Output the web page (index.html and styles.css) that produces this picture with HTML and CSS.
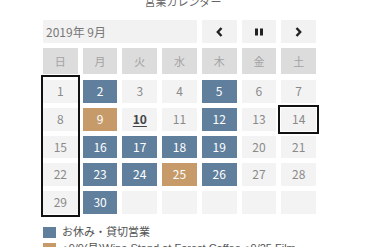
FILE: index.html
```html
<!DOCTYPE html>
<html lang="ja">
<head>
<meta charset="utf-8">
<title>営業カレンダー</title>
<link rel="stylesheet" href="styles.css">
</head>
<body>
<div class="cal">
  <div class="title">営業カレンダー</div>
  <div class="head-grid">
    <div class="month">2019年 9月</div>
    <div class="btn"><svg width="7" height="10" viewBox="0 0 7 10"><path d="M5.5 1 L1.8 5 L5.5 9" fill="none" stroke="#222" stroke-width="2.4"/></svg></div>
    <div class="btn"><svg width="8" height="8" viewBox="0 0 8 8"><rect x="0" y="0.5" width="3" height="7" fill="#222"/><rect x="5" y="0.5" width="3" height="7" fill="#222"/></svg></div>
    <div class="btn"><svg width="7" height="10" viewBox="0 0 7 10"><path d="M1.5 1 L5.2 5 L1.5 9" fill="none" stroke="#222" stroke-width="2.4"/></svg></div>
    <div class="wd">日</div>
    <div class="wd">月</div>
    <div class="wd">火</div>
    <div class="wd">水</div>
    <div class="wd">木</div>
    <div class="wd">金</div>
    <div class="wd">土</div>
  </div>
  <div class="dates">
    <div class="d">1</div>
    <div class="d off">2</div>
    <div class="d">3</div>
    <div class="d">4</div>
    <div class="d off">5</div>
    <div class="d">6</div>
    <div class="d">7</div>
    <div class="d">8</div>
    <div class="d ev">9</div>
    <div class="d today">10</div>
    <div class="d">11</div>
    <div class="d off">12</div>
    <div class="d">13</div>
    <div class="d sel">14</div>
    <div class="d">15</div>
    <div class="d off">16</div>
    <div class="d off">17</div>
    <div class="d off">18</div>
    <div class="d off">19</div>
    <div class="d">20</div>
    <div class="d">21</div>
    <div class="d">22</div>
    <div class="d off">23</div>
    <div class="d off">24</div>
    <div class="d ev">25</div>
    <div class="d off">26</div>
    <div class="d">27</div>
    <div class="d">28</div>
    <div class="d">29</div>
    <div class="d off">30</div>
    <div class="d"></div>
    <div class="d"></div>
    <div class="d"></div>
    <div class="d"></div>
    <div class="d"></div>
    <div class="sun-frame"></div>
  </div>
  <div class="legend">
    <div class="legend-item"><span class="swatch blue"></span><span>お休み・貸切営業</span></div>
    <div class="legend-item"><span class="swatch orange"></span><span>●9/9(月)Wine Stand at Forest Coffee ●9/25 Film Screening</span></div>
  </div>
</div>
</body>
</html>
```
FILE: styles.css
```css
body {
  margin: 0;
  background: #fff;
  font-family: "Noto Sans CJK JP", "Noto Sans", sans-serif;
}
.cal {
  width: 273px;
  margin-left: 43px;
}
.title {
  margin: -6px 0 12px;
  padding-left: 7px;
  text-align: center;
  font-size: 11px;
  line-height: 14px;
  color: #666;
}
.head-grid {
  display: grid;
  grid-template-columns: repeat(7, 1fr);
  grid-template-rows: 23px 26px;
  gap: 5px;
}
.month {
  grid-column: span 4;
  background: #f2f2f2;
  color: #777;
  font-size: 12px;
  line-height: 23px;
  padding-left: 3px;
}
.btn {
  background: #f2f2f2;
  display: flex;
  align-items: center;
  justify-content: center;
}
.wd {
  background: #dcdcdc;
  color: #a3a3a3;
  font-size: 11px;
  display: flex;
  align-items: center;
  justify-content: center;
}
.dates {
  position: relative;
  margin-top: 6px;
  display: grid;
  grid-template-columns: repeat(7, 1fr);
  grid-auto-rows: 22.75px;
  gap: 5px;
}
.d {
  background: #f3f3f3;
  color: #8a8a8a;
  font-size: 12px;
  line-height: 22.75px;
  text-align: center;
}
.d.off {
  background: #5f7f9d;
  color: #fff;
}
.d.ev {
  background: #c69b69;
  color: #fff;
}
.d.today {
  color: #444;
  font-weight: bold;
  text-decoration: underline;
  text-underline-offset: 2px;
}
.d.sel {
  outline: 2px solid #111;
  outline-offset: 1px;
}
.sun-frame {
  position: absolute;
  left: -2px;
  top: -5px;
  bottom: -3px;
  width: 39px;
  box-sizing: border-box;
  border: 2px solid #111;
  pointer-events: none;
}
.legend {
  margin-top: 10px;
  font-family: "Liberation Sans", "Noto Sans CJK JP", sans-serif;
  font-size: 11px;
  line-height: 16px;
  color: #555;
}
.legend-item {
  display: flex;
  gap: 6px;
  align-items: flex-start;
}
.swatch {
  flex: none;
  width: 13px;
  height: 11px;
  margin-top: 3px;
}
.swatch.blue { background: #5f7f9d; }
.swatch.orange { background: #c69b69; }
```
